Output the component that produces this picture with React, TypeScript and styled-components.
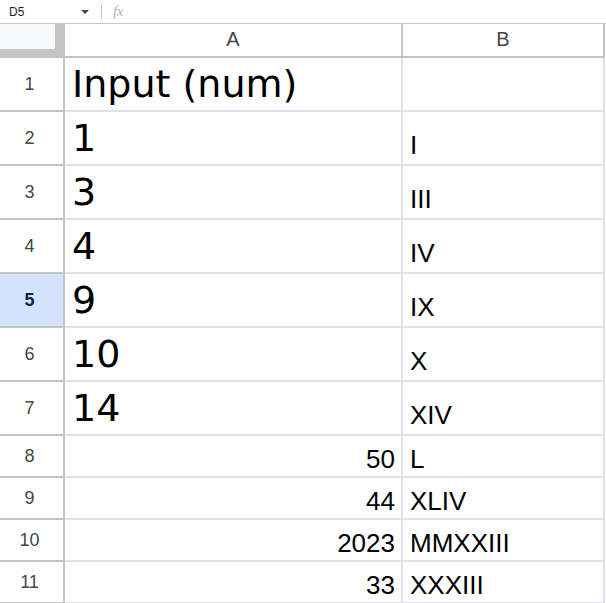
import React from "react";
import styled, { createGlobalStyle } from "styled-components";

const GlobalStyle = createGlobalStyle`
  html, body {
    margin: 0;
    padding: 0;
    background: #ffffff;
    font-family: "Liberation Sans", Arial, sans-serif;
  }
`;

type Row = { a: string; b: string; big: boolean };

const rows: Row[] = [
  { a: "Input (num)", b: "", big: true },
  { a: "1", b: "I", big: true },
  { a: "3", b: "III", big: true },
  { a: "4", b: "IV", big: true },
  { a: "9", b: "IX", big: true },
  { a: "10", b: "X", big: true },
  { a: "14", b: "XIV", big: true },
  { a: "50", b: "L", big: false },
  { a: "44", b: "XLIV", big: false },
  { a: "2023", b: "MMXXIII", big: false },
  { a: "33", b: "XXXIII", big: false },
];

const SELECTED_ROW = 5;

const Page = styled.div`
  width: 606px;
  height: 603px;
  overflow: hidden;
  background: #ffffff;
`;

const FormulaBar = styled.div`
  display: flex;
  align-items: center;
  height: 24px;
  box-sizing: border-box;
  border-bottom: 1px solid #c7c7c7;
`;

const NameBox = styled.div`
  display: flex;
  align-items: center;
  justify-content: space-between;
  box-sizing: border-box;
  width: 92px;
  padding: 0 3px 0 9px;
  font-size: 12px;
  color: #1f1f1f;
`;

const Caret = styled.span`
  width: 0;
  height: 0;
  border-left: 4px solid transparent;
  border-right: 4px solid transparent;
  border-top: 4px solid #444746;
`;

const Divider = styled.span`
  width: 1px;
  height: 15px;
  background: #c7c7c7;
  margin: 0 11px 0 9px;
`;

const Fx = styled.span`
  font-family: "Liberation Serif", "Times New Roman", serif;
  font-style: italic;
  font-size: 15px;
  color: #b4b4b4;
  letter-spacing: -0.5px;
`;

const Grid = styled.div`
  display: grid;
  grid-template-columns: 65px 338px 202px;
`;

const Corner = styled.div`
  height: 34px;
  box-sizing: border-box;
  background: #f8f9fa;
  border-right: 10px solid #c4c4c4;
  border-bottom: 9px solid #c4c4c4;
`;

const ColHeader = styled.div`
  height: 34px;
  box-sizing: border-box;
  display: flex;
  align-items: center;
  justify-content: center;
  border-right: 2px solid #c4c4c4;
  border-bottom: 2px solid #c4c4c4;
  font-size: 20px;
  color: #444746;
  padding-bottom: 1px;
`;

const RowHeader = styled.div<{ $big: boolean; $selected: boolean }>`
  height: ${(p) => (p.$big ? 54 : 42)}px;
  box-sizing: border-box;
  display: flex;
  align-items: center;
  justify-content: center;
  border-right: 2px solid #c4c4c4;
  border-bottom: 2px solid #c4c4c4;
  font-size: 18px;
  padding-right: 4px;
  background: ${(p) => (p.$selected ? "#d3e3fd" : "#ffffff")};
  color: ${(p) => (p.$selected ? "#0b1f4d" : "#444746")};
  font-weight: ${(p) => (p.$selected ? 700 : 400)};
`;

const Cell = styled.div<{ $big: boolean; $right?: boolean }>`
  height: ${(p) => (p.$big ? 54 : 42)}px;
  box-sizing: border-box;
  display: flex;
  align-items: flex-end;
  justify-content: ${(p) => (p.$right ? "flex-end" : "flex-start")};
  border-right: 2px solid #e0e0ea;
  border-bottom: 2px solid #e0e0ea;
  padding: 0 6px 1px 7px;
  color: #000000;
  white-space: nowrap;
  overflow: hidden;
`;

const BigText = styled.span`
  font-family: "DejaVu Sans", Verdana, sans-serif;
  font-size: 38px;
  line-height: 1;
  padding-bottom: 6px;
`;

const Text = styled.span<{ $lift: number }>`
  font-size: 26px;
  line-height: 1;
  padding-bottom: ${(p) => p.$lift}px;
`;

export default function App() {
  return (
    <Page>
      <GlobalStyle />
      <FormulaBar>
        <NameBox>
          D5
          <Caret />
        </NameBox>
        <Divider />
        <Fx>fx</Fx>
      </FormulaBar>
      <Grid>
        <Corner />
        <ColHeader>A</ColHeader>
        <ColHeader>B</ColHeader>
        {rows.map((r, i) => (
          <React.Fragment key={i}>
            <RowHeader $big={r.big} $selected={i + 1 === SELECTED_ROW}>
              {i + 1}
            </RowHeader>
            {r.big ? (
              <Cell $big>
                <BigText>{r.a}</BigText>
              </Cell>
            ) : (
              <Cell $big={false} $right>
                <Text $lift={3}>{r.a}</Text>
              </Cell>
            )}
            <Cell $big={r.big}>
              <Text $lift={r.big ? 5 : 3}>{r.b}</Text>
            </Cell>
          </React.Fragment>
        ))}
      </Grid>
    </Page>
  );
}
